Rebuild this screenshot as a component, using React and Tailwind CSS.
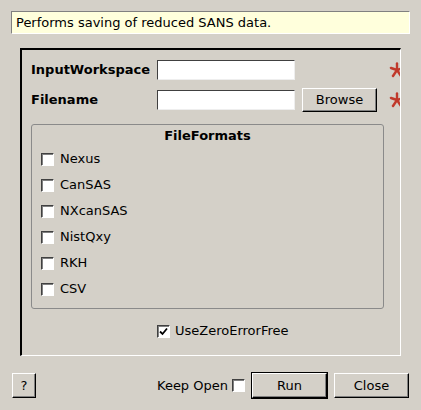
import React from 'react';

const FORMATS = ['Nexus', 'CanSAS', 'NXcanSAS', 'NistQxy', 'RKH', 'CSV'];

function Check({ checked }) {
  return (
    <span className="w-[13px] h-[13px] shrink-0 bg-white border-t border-l border-[#404040] border-b border-r border-b-white border-r-white shadow-[inset_1px_1px_#808080] flex items-center justify-center">
      {checked && (
        <svg width="9" height="9" viewBox="0 0 9 9">
          <path d="M1 4.5 L3.5 7 L8 1.5" fill="none" stroke="#000" strokeWidth="1.8" />
        </svg>
      )}
    </span>
  );
}

function Star() {
  return (
    <svg width="16" height="16" viewBox="0 0 16 16" className="shrink-0">
      <g stroke="#c0392b" strokeWidth="2.4" strokeLinecap="round">
        <line x1="8" y1="8" x2="8" y2="1.5" />
        <line x1="8" y1="8" x2="2" y2="6" />
        <line x1="8" y1="8" x2="14" y2="6" />
        <line x1="8" y1="8" x2="4" y2="14" />
        <line x1="8" y1="8" x2="12" y2="14" />
      </g>
    </svg>
  );
}

const btn =
  'flex items-center justify-center border-t border-l border-white border-b border-r border-b-black border-r-black shadow-[inset_-1px_-1px_#808080] text-[13px]';

export default function App() {
  return (
    <div className="w-[421px] h-[410px] bg-[#d4d0c8] text-black text-[13px] flex flex-col overflow-hidden" style={{ fontFamily: '"DejaVu Sans", sans-serif' }}>
      {/* description */}
      <div className="mx-[11px] mt-[11px] h-[23px] bg-[#ffffdc] border-t border-l border-[#808080] border-b border-r border-b-white border-r-white flex items-center pl-[4px] leading-none">
        Performs saving of reduced SANS data.
      </div>

      {/* property area */}
      <div className="ml-[20px] mt-[14px] w-[381px] h-[308px] border-t-2 border-l-2 border-black border-b border-r border-b-white border-r-white overflow-hidden flex flex-col">
        <div className="flex items-center h-[20px] mt-[10px] pl-[9px] w-[420px]">
          <span className="w-[126px] font-bold shrink-0">InputWorkspace</span>
          <span className="w-[138px] h-[20px] shrink-0 bg-white border-t border-l border-[#404040] border-b border-r border-b-[#eeeeee] border-r-[#eeeeee]" />
          <span className="ml-[94px]"><Star /></span>
        </div>
        <div className="flex items-center h-[24px] mt-[8px] pl-[9px] w-[420px]">
          <span className="w-[126px] font-bold shrink-0">Filename</span>
          <span className="w-[138px] h-[20px] shrink-0 bg-white border-t border-l border-[#404040] border-b border-r border-b-[#eeeeee] border-r-[#eeeeee]" />
          <span className={`${btn} ml-[7px] w-[75px] h-[24px] shrink-0`}>Browse</span>
          <span className="ml-[12px]"><Star /></span>
        </div>

        {/* FileFormats group */}
        <div className="ml-[9px] mt-[12px] w-[353px] h-[185px] border border-[#8a8a8a] rounded-[3px] flex flex-col">
          <div className="mt-[3px] h-[15px] font-bold text-center leading-[15px]">FileFormats</div>
          <div className="mt-[3px] flex flex-col">
            {FORMATS.map((f) => (
              <div key={f} className="h-[26px] flex items-center pl-[9px] gap-[6px]">
                <Check />
                <span>{f}</span>
              </div>
            ))}
          </div>
        </div>

        <div className="mt-[12px] h-[20px] flex items-center pl-[135px] gap-[5px]">
          <Check checked />
          <span>UseZeroErrorFree</span>
        </div>
      </div>

      {/* buttons */}
      <div className="mt-[16px] flex items-center pl-[12px]">
        <span className={`${btn} w-[24px] h-[25px] shrink-0`}>?</span>
        <span className="ml-[121px] w-[75px] shrink-0 whitespace-nowrap">Keep Open</span>
        <Check />
        <span className="ml-[6px] w-[77px] h-[27px] border border-black flex shrink-0">
          <span className={`${btn} flex-1`}>Run</span>
        </span>
        <span className={`${btn} ml-[6px] w-[75px] h-[25px] shrink-0`}>Close</span>
      </div>
    </div>
  );
}
